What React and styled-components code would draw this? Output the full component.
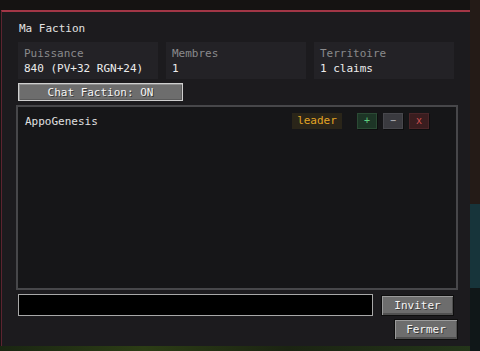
import styled, { createGlobalStyle } from "styled-components";

const GlobalStyle = createGlobalStyle`
  html, body {
    margin: 0;
    width: 480px;
    height: 351px;
    overflow: hidden;
  }
  body {
    font-family: "DejaVu Sans Mono", "Liberation Mono", monospace;
    background:
      linear-gradient(to bottom, #241b17 0 58%, #17343a 58% 82%, #101718 82%) right top / 10px 100% no-repeat,
      linear-gradient(to right, #1a2612, #2c3d15 30%, #1b2412 60%, #24361a) left bottom / 100% 5px no-repeat,
      #151312;
  }
`;

const Screen = styled.div`
  width: 480px;
  height: 351px;
  padding: 10px 0 0 1px;
  box-sizing: border-box;
`;

const Panel = styled.div`
  width: 469px;
  height: 336px;
  box-sizing: border-box;
  background: #1c1b1e;
  border-top: 2px solid #a23646;
  border-left: 1px solid #5c2430;
  padding: 0 12px 0 14px;
  display: flex;
  flex-direction: column;
`;

const Title = styled.div`
  color: #e2e2e2;
  font-size: 11px;
  line-height: 12px;
  padding: 11px 0 0 3px;
  height: 30px;
  box-sizing: border-box;
`;

const Stats = styled.div`
  display: grid;
  grid-template-columns: repeat(3, 140px);
  gap: 8px;
  margin: 0 2px;
`;

const Card = styled.div`
  height: 37px;
  background: #232226;
  padding: 6px 6px 0;
  box-sizing: border-box;
  display: flex;
  flex-direction: column;
  gap: 3px;
  font-size: 11px;
  line-height: 12px;
`;

const Label = styled.span`
  color: #8a8a8c;
`;

const Value = styled.span`
  color: #ececec;
`;

const McButton = styled.button`
  display: block;
  font-family: inherit;
  font-size: 11px;
  color: #f4f4f4;
  text-shadow: 1px 1px 0 #3a3a3a;
  background: #6d6d6d;
  padding: 0;
  cursor: pointer;
  width: ${(p) => p.$w}px;
  height: ${(p) => p.$h}px;
  border: 1px solid ${(p) => (p.$light ? "#cfcfcf" : "#0e0e0e")};
  box-shadow: ${(p) =>
    p.$light
      ? "inset 1px 1px 0 #8e8e8e, inset -1px -1px 0 #5a5a5a"
      : "inset 1px 1px 0 #9a9a9a, inset -1px -2px 0 #505050"};
`;

const ToggleRow = styled.div`
  display: flex;
  margin: 4px 0 0 2px;
`;

const List = styled.div`
  margin-top: 4px;
  height: 185px;
  box-sizing: border-box;
  border: 2px solid #47474a;
  background: #161618;
  padding: 6px 27px 0 7px;
`;

const MemberRow = styled.div`
  display: flex;
  align-items: center;
  height: 16px;
  font-size: 11px;
`;

const Name = styled.span`
  flex: 1;
  color: #e0e0e0;
`;

const Role = styled.span`
  background: #2a2519;
  color: #e3a424;
  width: 50px;
  height: 16px;
  line-height: 16px;
  text-align: center;
  margin-right: 9px;
`;

const tones = {
  add: { bg: "#1d3526", fg: "#5fd080", bd: "#2b4a34" },
  remove: { bg: "#3a3a3f", fg: "#b8b8bc", bd: "#47474c" },
  kick: { bg: "#3a1d1f", fg: "#d05050", bd: "#4a2528" },
};

const IconButton = styled.button`
  width: 20px;
  height: 16px;
  padding: 0;
  margin-left: 6px;
  font-family: inherit;
  font-size: 10px;
  line-height: 14px;
  background: ${(p) => tones[p.$tone].bg};
  color: ${(p) => tones[p.$tone].fg};
  border: 1px solid ${(p) => tones[p.$tone].bd};
  box-shadow: 1px 1px 0 #0d0d0e;
`;

const InviteRow = styled.div`
  display: flex;
  align-items: center;
  gap: 8px;
  margin: 4px 0 0 2px;
`;

const Input = styled.input`
  width: 355px;
  height: 22px;
  box-sizing: border-box;
  background: #000;
  border: 1px solid #a8a8a8;
  color: #e0e0e0;
  font-family: inherit;
  font-size: 11px;
  padding: 0 4px;
  outline: none;
`;

const CloseRow = styled.div`
  display: flex;
  justify-content: flex-end;
  margin: 3px 0 0;
`;

const stats = [
  { label: "Puissance", value: "840 (PV+32 RGN+24)" },
  { label: "Membres", value: "1" },
  { label: "Territoire", value: "1 claims" },
];

const App = () => {
  return (
    <Screen>
      <GlobalStyle />
      <Panel>
        <Title>Ma Faction</Title>
        <Stats>
          {stats.map((s) => (
            <Card key={s.label}>
              <Label>{s.label}</Label>
              <Value>{s.value}</Value>
            </Card>
          ))}
        </Stats>
        <ToggleRow>
          <McButton $light $w={165} $h={18}>Chat Faction: ON</McButton>
        </ToggleRow>
        <List>
          <MemberRow>
            <Name>AppoGenesis</Name>
            <Role>leader</Role>
            <IconButton $tone="add">+</IconButton>
            <IconButton $tone="remove">−</IconButton>
            <IconButton $tone="kick">x</IconButton>
          </MemberRow>
        </List>
        <InviteRow>
          <Input />
          <McButton $w={73} $h={21}>Inviter</McButton>
        </InviteRow>
        <CloseRow>
          <McButton $w={64} $h={21}>Fermer</McButton>
        </CloseRow>
      </Panel>
    </Screen>
  );
};

export default App;
